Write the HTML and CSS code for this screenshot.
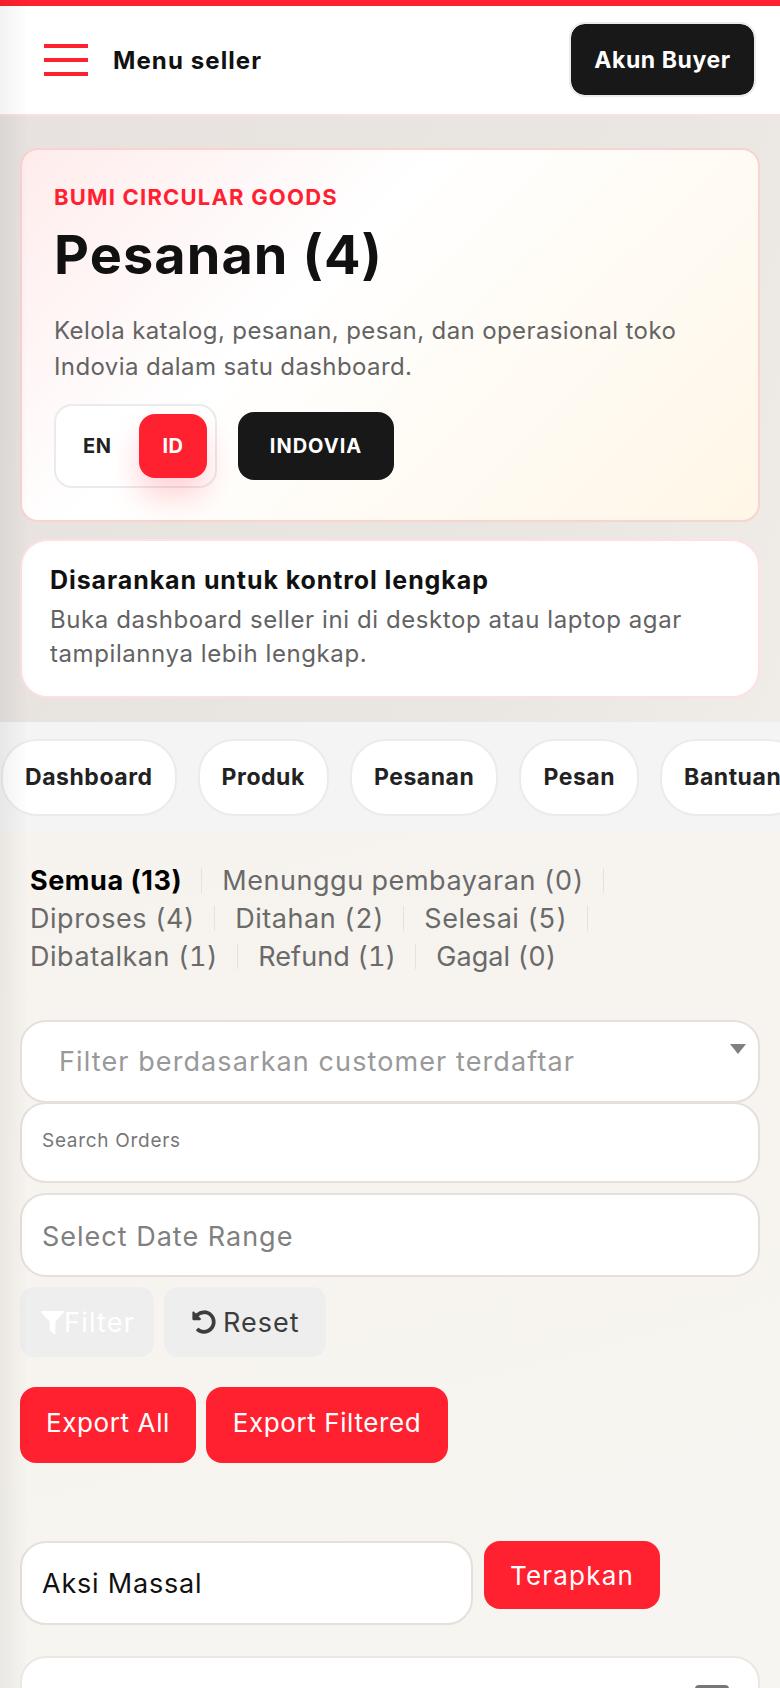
FILE: index.html
```html
<!DOCTYPE html>
<html lang="id">
<head>
    <meta charset="UTF-8">
    <meta name="viewport" content="width=device-width, initial-scale=1.0">
    <title>Pesanan (4)</title>
    <link rel="stylesheet" href="styles.css">
</head>
<body>
    <div class="edge-shade"></div>

    <header class="topbar">
        <div class="topbar-left">
            <div class="burger"><span></span><span></span><span></span></div>
            <div class="menu-label">Menu seller</div>
        </div>
        <button class="buyer-btn">Akun Buyer</button>
    </header>

    <section class="upper">
        <div class="hero">
            <div class="hero-store">BUMI CIRCULAR GOODS</div>
            <h1 class="hero-title">Pesanan (4)</h1>
            <p class="hero-text">Kelola katalog, pesanan, pesan, dan operasional toko Indovia dalam satu dashboard.</p>
            <div class="hero-actions">
                <div class="lang-switch">
                    <span class="lang-en">EN</span>
                    <span class="lang-id">ID</span>
                </div>
                <button class="indovia-btn">INDOVIA</button>
            </div>
        </div>

        <div class="notice">
            <div class="notice-title">Disarankan untuk kontrol lengkap</div>
            <p class="notice-text">Buka dashboard seller ini di desktop atau laptop agar tampilannya lebih lengkap.</p>
        </div>
    </section>

    <nav class="pill-bar">
        <a class="pill">Dashboard</a>
        <a class="pill">Produk</a>
        <a class="pill">Pesanan</a>
        <a class="pill">Pesan</a>
        <a class="pill">Bantuan</a>
    </nav>

    <main class="orders">
        <ul class="status-list">
            <li class="active">Semua (13)</li>
            <li>Menunggu pembayaran (0)</li>
            <li>Diproses (4)</li>
            <li>Ditahan (2)</li>
            <li>Selesai (5)</li>
            <li>Dibatalkan (1)</li>
            <li class="tight">Refund (1)</li>
            <li class="tight last">Gagal (0)</li>
        </ul>

        <div class="field field-select">
            Filter berdasarkan customer terdaftar
            <span class="select-arrow"></span>
        </div>
        <div class="field field-search">Search Orders</div>
        <div class="field field-date">Select Date Range</div>

        <div class="filter-actions">
            <button class="soft-btn filter-btn">
                <svg class="icon-funnel" viewBox="0 0 512 512"><path d="M487.976 0H24.028C2.71 0-8.047 25.866 7.058 40.971L192 225.941V432c0 7.831 3.821 15.17 10.237 19.662l80 55.98C298.02 518.69 320 507.493 320 487.98V225.941l184.947-184.97C520.021 25.896 509.338 0 487.976 0z"/></svg>Filter
            </button>
            <button class="soft-btn reset-btn">
                <svg class="icon-undo" viewBox="0 0 512 512"><path d="M255.545 8c-66.269.119-126.438 26.233-170.86 68.685L48.971 40.971C33.851 25.851 8 36.559 8 57.941V192c0 13.255 10.745 24 24 24h134.059c21.382 0 32.09-25.851 16.971-40.971l-41.75-41.75c30.864-28.899 70.801-44.907 113.23-45.273 92.398-.798 170.283 73.977 169.484 169.442C423.236 348.009 349.816 424 256 424c-41.127 0-79.997-14.678-110.63-41.556-4.743-4.161-11.906-3.908-16.368.553L89.34 422.659c-4.872 4.872-4.631 12.815.482 17.433C133.798 479.813 192.074 504 256 504c136.966 0 247.999-111.033 248-247.998C504.001 119.193 392.354 7.755 255.545 8z"/></svg>
                Reset
            </button>
        </div>

        <div class="export-actions">
            <button class="red-btn export-all">Export All</button>
            <button class="red-btn export-filtered">Export Filtered</button>
        </div>

        <div class="bulk-row">
            <div class="field field-bulk">Aksi Massal</div>
            <button class="red-btn apply-btn">Terapkan</button>
        </div>

        <div class="table-card"><span class="card-check"></span></div>
    </main>
</body>
</html>
```

FILE: styles.css
```css
* {
    box-sizing: border-box;
}

html, body {
    height: 1688px;
    overflow: hidden;
}

body {
    margin: 0;
    font-family: 'Inter', 'Noto Sans', sans-serif;
    background: linear-gradient(165deg, #f4efea 0%, #f7f4ef 60%, #f7f5f1 100%);
    color: #111;
}

button {
    font-family: inherit;
    border: none;
    cursor: pointer;
}

.edge-shade {
    position: fixed;
    left: 0;
    top: 0;
    bottom: 0;
    width: 28px;
    background: linear-gradient(90deg, rgba(0, 0, 0, 0.05), rgba(0, 0, 0, 0));
    pointer-events: none;
}

.topbar {
    height: 116px;
    display: flex;
    justify-content: space-between;
    align-items: center;
    padding: 0 24px 0 44px;
    background: #fff;
    border-top: 6px solid #ff2130;
    border-bottom: 2px solid #ffe0e2;
}

.topbar-left {
    display: flex;
    align-items: center;
    gap: 25px;
}

.burger {
    width: 44px;
    display: flex;
    flex-direction: column;
    gap: 10px;
}

.burger span {
    display: block;
    height: 4px;
    background: #ff2130;
}

.menu-label {
    font-size: 24px;
    font-weight: 700;
    letter-spacing: 1.1px;
}

.buyer-btn {
    width: 187px;
    height: 75px;
    margin-top: -1px;
    border: 2px solid #ebebeb;
    border-radius: 16px;
    background: #181818;
    background-clip: padding-box;
    color: #fff;
    font-size: 23px;
    font-weight: 700;
    letter-spacing: 0.6px;
}

.upper {
    padding: 32px 20px 24px;
    background: linear-gradient(110deg, #e7e2df 0%, #eae6e1 70%, #f0ece7 100%);
}

.hero {
    height: 374px;
    padding: 34px 32px 0;
    border: 2px solid #f8d3cf;
    border-radius: 18px;
    background: linear-gradient(135deg, #ffecec 0%, #fff 38%, #fff6e6 100%);
}

.hero-store {
    font-size: 22px;
    font-weight: 700;
    letter-spacing: 1.2px;
    color: #ff2130;
}

.hero-title {
    margin: 12px 0 0;
    font-size: 54px;
    font-weight: 700;
    letter-spacing: 1.1px;
    line-height: 66px;
}

.hero-text {
    margin: 25px 0 0;
    font-size: 24px;
    letter-spacing: 0.39px;
    line-height: 36px;
    color: #636363;
}

.hero-actions {
    margin-top: 19px;
    display: flex;
    align-items: center;
    gap: 21px;
}

.lang-switch {
    width: 163px;
    height: 84px;
    display: flex;
    align-items: center;
    justify-content: space-between;
    padding-left: 27px;
    padding-right: 8px;
    border: 2px solid #ebebeb;
    border-radius: 18px;
    background: #fff;
    font-size: 20px;
    font-weight: 700;
    letter-spacing: 0.5px;
}

.lang-en {
    color: #222;
}

.lang-id {
    width: 68px;
    height: 64px;
    display: flex;
    align-items: center;
    justify-content: center;
    border-radius: 16px;
    background: #ff2130;
    color: #fff;
    box-shadow: 0 18px 30px rgba(255, 33, 48, 0.2);
}

.indovia-btn {
    width: 156px;
    height: 68px;
    border-radius: 16px;
    background: #181818;
    color: #fff;
    font-size: 20px;
    font-weight: 700;
    letter-spacing: 1px;
}

.notice {
    height: 159px;
    margin-top: 17px;
    padding: 23px 28px 0;
    border: 2px solid #ffe0e2;
    border-radius: 28px;
    background: #fff;
}

.notice-title {
    font-size: 25px;
    font-weight: 700;
    letter-spacing: 0.92px;
    line-height: 32px;
}

.notice-text {
    margin: 7px 0 0;
    font-size: 24px;
    letter-spacing: 0.58px;
    line-height: 34px;
    color: #636363;
}

.pill-bar {
    height: 110px;
    display: flex;
    align-items: center;
    gap: 21px;
    padding-left: 1px;
    overflow: hidden;
    background: #f4f4f5;
}

.pill {
    flex: none;
    height: 77px;
    display: flex;
    align-items: center;
    padding: 0 22px;
    border: 2px solid #ebebeb;
    border-radius: 36px;
    background: #fff;
    font-size: 23px;
    font-weight: 700;
    letter-spacing: 0.55px;
    color: #222;
}

.orders {
    padding: 30px 20px 0;
}

.status-list {
    display: flex;
    flex-wrap: wrap;
    margin: 0;
    padding: 0 0 0 10px;
    list-style: none;
    font-size: 27px;
    font-variant-numeric: tabular-nums;
    letter-spacing: 0.55px;
    line-height: 38px;
    color: #6a6a6a;
}

.status-list li {
    display: flex;
    align-items: center;
    padding-right: 20px;
    margin-right: 20px;
    position: relative;
}

.status-list li::after {
    content: "";
    position: absolute;
    right: 0;
    top: 6px;
    height: 25px;
    width: 1px;
    background: #e4e2df;
}

.status-list li.last::after {
    display: none;
}

.status-list .active {
    font-weight: 700;
    font-variant-numeric: normal;
    color: #000;
}

.status-list .tight {
    letter-spacing: 0.1px;
}

.field {
    border: 2px solid #e5e0dc;
    border-radius: 26px;
    background: #fff;
    display: flex;
    align-items: center;
    padding-left: 20px;
    color: #808080;
    font-size: 27px;
    letter-spacing: 1px;
}

.field-select {
    height: 83px;
    margin-top: 44px;
    padding-left: 37px;
    position: relative;
    letter-spacing: 1.1px;
    color: #999;
}

.select-arrow {
    position: absolute;
    right: 12px;
    top: 22px;
    border-left: 8px solid transparent;
    border-right: 8px solid transparent;
    border-top: 10px solid #808080;
}

.field-search {
    height: 81px;
    margin-top: -1px;
    padding-bottom: 4px;
    font-size: 19px;
    letter-spacing: 0.7px;
    color: #777;
}

.field-date {
    height: 84px;
    margin-top: 10px;
    padding-top: 2px;
}

.filter-actions {
    margin-top: 10px;
    display: flex;
    gap: 10px;
}

.soft-btn {
    height: 70px;
    display: flex;
    align-items: center;
    border-radius: 14px;
    background: #eeeeef;
    font-size: 27px;
    letter-spacing: 1px;
}

.filter-btn {
    width: 134px;
    padding-left: 21px;
    color: #fff;
    letter-spacing: 1.2px;
}

.reset-btn {
    width: 162px;
    padding-left: 28px;
    gap: 7px;
    color: #3d3d3d;
}

.icon-funnel {
    width: 23px;
    height: 23px;
    fill: #fff;
}

.icon-undo {
    width: 24px;
    height: 24px;
    fill: #3d3d3d;
}

.export-actions {
    margin-top: 30px;
    display: flex;
    gap: 10px;
}

.red-btn {
    height: 76px;
    padding-bottom: 6px;
    border-radius: 16px;
    background: #ff2130;
    color: #fff;
    font-size: 26px;
    letter-spacing: 0.6px;
}

.export-all {
    width: 176px;
}

.export-filtered {
    width: 242px;
}

.bulk-row {
    margin-top: 78px;
    display: flex;
    align-items: flex-start;
    gap: 11px;
}

.field-bulk {
    width: 453px;
    height: 84px;
    letter-spacing: 0.8px;
    color: #111;
}

.apply-btn {
    width: 176px;
    height: 68px;
    padding-bottom: 0;
    letter-spacing: 1.2px;
}

.table-card {
    height: 120px;
    margin-top: 31px;
    position: relative;
    border: 2px solid #ebe8e4;
    border-radius: 26px;
    background: #fff;
}

.card-check {
    position: absolute;
    right: 29px;
    top: 27px;
    width: 34px;
    height: 34px;
    border-radius: 4px;
    background: #767676;
}
```
